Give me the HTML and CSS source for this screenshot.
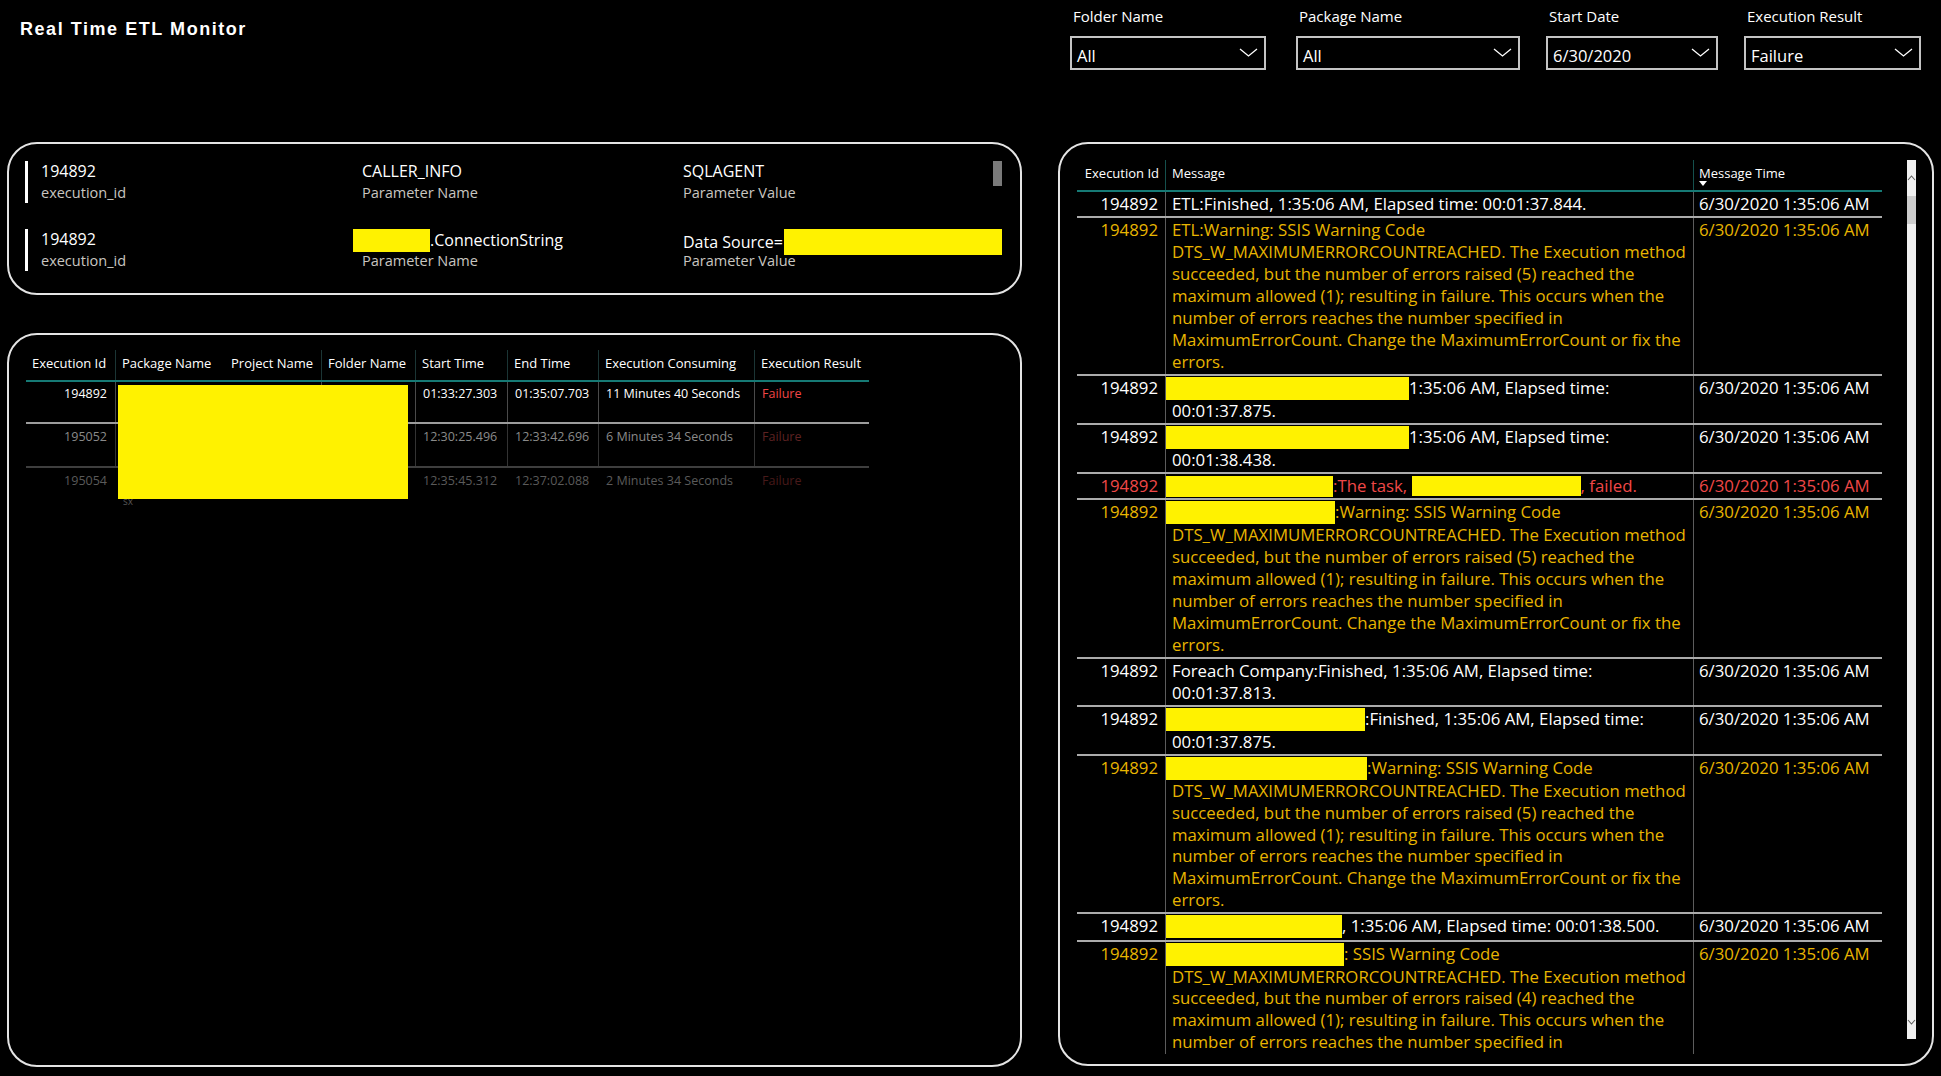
FILE: index.html
```html
<!DOCTYPE html>
<html lang="en">
<head>
<meta charset="utf-8">
<title>Real Time ETL Monitor</title>
<link rel="stylesheet" href="styles.css">
</head>
<body>
<div class="page">
  <header class="topbar">
    <h1 class="title">Real Time ETL Monitor</h1>
    <div class="filters">
      <div class="filter f-folder">
        <div class="flabel">Folder Name</div>
        <div class="select"><span>All</span><svg class="chev" viewBox="0 0 19 9" width="19" height="9"><polyline points="1,1 9.5,8 18,1" fill="none" stroke="#fff" stroke-width="1.3"/></svg></div>
      </div>
      <div class="filter f-package">
        <div class="flabel">Package Name</div>
        <div class="select"><span>All</span><svg class="chev" viewBox="0 0 19 9" width="19" height="9"><polyline points="1,1 9.5,8 18,1" fill="none" stroke="#fff" stroke-width="1.3"/></svg></div>
      </div>
      <div class="filter f-date">
        <div class="flabel">Start Date</div>
        <div class="select"><span>6/30/2020</span><svg class="chev" viewBox="0 0 19 9" width="19" height="9"><polyline points="1,1 9.5,8 18,1" fill="none" stroke="#fff" stroke-width="1.3"/></svg></div>
      </div>
      <div class="filter f-result">
        <div class="flabel">Execution Result</div>
        <div class="select"><span>Failure</span><svg class="chev" viewBox="0 0 19 9" width="19" height="9"><polyline points="1,1 9.5,8 18,1" fill="none" stroke="#fff" stroke-width="1.3"/></svg></div>
      </div>
    </div>
  </header>

  <main class="main">
    <div class="leftcol">
      <section class="panel params">
        <div class="prow">
          <div class="pcell"><div class="pval">194892</div><div class="plab">execution_id</div></div>
          <div class="pcell"><div class="pval">CALLER_INFO</div><div class="plab">Parameter Name</div></div>
          <div class="pcell"><div class="pval">SQLAGENT</div><div class="plab">Parameter Value</div></div>
        </div>
        <div class="prow">
          <div class="pcell"><div class="pval">194892</div><div class="plab">execution_id</div></div>
          <div class="pcell"><div class="pval"><span class="redact r-conn"></span>.ConnectionString</div><div class="plab">Parameter Name</div></div>
          <div class="pcell"><div class="pval">Data Source=<span class="redact r-ds"></span></div><div class="plab">Parameter Value</div></div>
        </div>
        <div class="pscroll"></div>
      </section>

      <section class="panel execs">
        <div class="etable">
          <div class="erow ehead">
            <div class="ec c-id">Execution Id</div>
            <div class="ec c-pkg">Package Name</div>
            <div class="ec c-prj">Project Name</div>
            <div class="ec c-fld">Folder Name</div>
            <div class="ec c-st">Start Time</div>
            <div class="ec c-et">End Time</div>
            <div class="ec c-ec">Execution Consuming</div>
            <div class="ec c-er">Execution Result</div>
          </div>
          <div class="erow ebody r1">
            <div class="ec c-id">194892</div>
            <div class="ec c-pkg"></div>
            <div class="ec c-prj"></div>
            <div class="ec c-fld"></div>
            <div class="ec c-st">01:33:27.303</div>
            <div class="ec c-et">01:35:07.703</div>
            <div class="ec c-ec">11 Minutes 40 Seconds</div>
            <div class="ec c-er fail">Failure</div>
          </div>
          <div class="erow ebody r2">
            <div class="ec c-id">195052</div>
            <div class="ec c-pkg"></div>
            <div class="ec c-prj"></div>
            <div class="ec c-fld"></div>
            <div class="ec c-st">12:30:25.496</div>
            <div class="ec c-et">12:33:42.696</div>
            <div class="ec c-ec">6 Minutes 34 Seconds</div>
            <div class="ec c-er fail">Failure</div>
          </div>
          <div class="erow ebody r3">
            <div class="ec c-id">195054</div>
            <div class="ec c-pkg"><span class="sx">sx</span></div>
            <div class="ec c-prj"></div>
            <div class="ec c-fld"></div>
            <div class="ec c-st">12:35:45.312</div>
            <div class="ec c-et">12:37:02.088</div>
            <div class="ec c-ec">2 Minutes 34 Seconds</div>
            <div class="ec c-er fail">Failure</div>
          </div>
          <div class="redact r-exec"></div>
        </div>
      </section>
    </div>

    <section class="panel messages">
      <div class="mwrap">
        <div class="mrow mhead">
          <div class="mc m-id">Execution Id</div>
          <div class="mc m-msg">Message</div>
          <div class="mc m-time">Message Time<span class="sort"></span></div>
        </div>
        <div class="mrow info">
          <div class="mc m-id">194892</div>
          <div class="mc m-msg">ETL:Finished, 1:35:06 AM, Elapsed time: 00:01:37.844.</div>
          <div class="mc m-time">6/30/2020 1:35:06 AM</div>
        </div>
        <div class="mrow warn">
          <div class="mc m-id">194892</div>
          <div class="mc m-msg">ETL:Warning: SSIS Warning Code<br>DTS_W_MAXIMUMERRORCOUNTREACHED. The Execution method<br>succeeded, but the number of errors raised (5) reached the<br>maximum allowed (1); resulting in failure. This occurs when the<br>number of errors reaches the number specified in<br>MaximumErrorCount. Change the MaximumErrorCount or fix the<br>errors.</div>
          <div class="mc m-time">6/30/2020 1:35:06 AM</div>
        </div>
        <div class="mrow info">
          <div class="mc m-id">194892</div>
          <div class="mc m-msg"><span class="redact mr" style="width:243px"></span>1:35:06 AM, Elapsed time:<br>00:01:37.875.</div>
          <div class="mc m-time">6/30/2020 1:35:06 AM</div>
        </div>
        <div class="mrow info">
          <div class="mc m-id">194892</div>
          <div class="mc m-msg"><span class="redact mr" style="width:243px"></span>1:35:06 AM, Elapsed time:<br>00:01:38.438.</div>
          <div class="mc m-time">6/30/2020 1:35:06 AM</div>
        </div>
        <div class="mrow err">
          <div class="mc m-id">194892</div>
          <div class="mc m-msg"><span class="redact mr" style="width:167px"></span>:The task, <span class="redact mr2" style="width:169px"></span>, failed.</div>
          <div class="mc m-time">6/30/2020 1:35:06 AM</div>
        </div>
        <div class="mrow warn">
          <div class="mc m-id">194892</div>
          <div class="mc m-msg"><span class="redact mr" style="width:169px"></span>:Warning: SSIS Warning Code<br>DTS_W_MAXIMUMERRORCOUNTREACHED. The Execution method<br>succeeded, but the number of errors raised (5) reached the<br>maximum allowed (1); resulting in failure. This occurs when the<br>number of errors reaches the number specified in<br>MaximumErrorCount. Change the MaximumErrorCount or fix the<br>errors.</div>
          <div class="mc m-time">6/30/2020 1:35:06 AM</div>
        </div>
        <div class="mrow info">
          <div class="mc m-id">194892</div>
          <div class="mc m-msg">Foreach Company:Finished, 1:35:06 AM, Elapsed time:<br>00:01:37.813.</div>
          <div class="mc m-time">6/30/2020 1:35:06 AM</div>
        </div>
        <div class="mrow info">
          <div class="mc m-id">194892</div>
          <div class="mc m-msg"><span class="redact mr" style="width:199px"></span>:Finished, 1:35:06 AM, Elapsed time:<br>00:01:37.875.</div>
          <div class="mc m-time">6/30/2020 1:35:06 AM</div>
        </div>
        <div class="mrow warn">
          <div class="mc m-id">194892</div>
          <div class="mc m-msg"><span class="redact mr" style="width:201px"></span>:Warning: SSIS Warning Code<br>DTS_W_MAXIMUMERRORCOUNTREACHED. The Execution method<br>succeeded, but the number of errors raised (5) reached the<br>maximum allowed (1); resulting in failure. This occurs when the<br>number of errors reaches the number specified in<br>MaximumErrorCount. Change the MaximumErrorCount or fix the<br>errors.</div>
          <div class="mc m-time">6/30/2020 1:35:06 AM</div>
        </div>
        <div class="mrow info">
          <div class="mc m-id">194892</div>
          <div class="mc m-msg"><span class="redact mr" style="width:176px"></span>, 1:35:06 AM, Elapsed time: 00:01:38.500.</div>
          <div class="mc m-time">6/30/2020 1:35:06 AM</div>
        </div>
        <div class="mrow warn last">
          <div class="mc m-id">194892</div>
          <div class="mc m-msg"><span class="redact mr" style="width:178px"></span>: SSIS Warning Code<br>DTS_W_MAXIMUMERRORCOUNTREACHED. The Execution method<br>succeeded, but the number of errors raised (4) reached the<br>maximum allowed (1); resulting in failure. This occurs when the<br>number of errors reaches the number specified in</div>
          <div class="mc m-time">6/30/2020 1:35:06 AM</div>
        </div>
      </div>
      <div class="vscroll">
        <svg class="arr" viewBox="0 0 9 6" width="9" height="6"><polyline points="1,5 4.5,1 8,5" fill="none" stroke="#606060" stroke-width="1.1"/></svg>
        <div class="vthumb"></div>
        <div class="vspace"></div>
        <svg class="arr" viewBox="0 0 9 6" width="9" height="6"><polyline points="1,1 4.5,5 8,1" fill="none" stroke="#606060" stroke-width="1.1"/></svg>
      </div>
    </section>
  </main>
</div>
</body>
</html>
```

FILE: styles.css
```css
* { box-sizing: border-box; }
html, body { margin: 0; padding: 0; background: #000; }
body {
  width: 1941px;
  height: 1076px;
  overflow: hidden;
  color: #fff;
  font-family: "Open Sans", "Noto Sans", sans-serif;
}
.page { width: 1941px; height: 1076px; }

/* ---------- top bar ---------- */
.topbar {
  display: flex;
  align-items: flex-start;
  height: 142px;
}
.title {
  margin: 0;
  padding: 18px 0 0 20px;
  font-family: "Liberation Sans", Arial, sans-serif;
  font-weight: 700;
  font-size: 18px;
  line-height: 22px;
  letter-spacing: 1.55px;
  color: #fff;
}
.filters {
  display: flex;
  margin-left: auto;
  padding-right: 20px;
  padding-top: 6px;
}
.filter { display: flex; flex-direction: column; }
.f-folder { width: 196px; }
.f-package { width: 224px; margin-left: 30px; }
.f-date { width: 172px; margin-left: 26px; }
.f-result { width: 177px; margin-left: 26px; }
.flabel {
  font-size: 15px;
  line-height: 20px;
  padding-left: 3px;
  color: #fff;
  margin-bottom: 10px;
  white-space: nowrap;
}
.select {
  height: 34px;
  border: 2px solid #c4c4c4;
  display: flex;
  align-items: center;
  justify-content: space-between;
  padding: 4px 6px 0 5px;
  font-size: 16.5px;
  color: #fff;
}
.chev { display: block; margin-top: -5px; }

/* ---------- main grid ---------- */
.main {
  display: grid;
  grid-template-columns: 1015px 876px;
  column-gap: 36px;
  padding-left: 7px;
}
.leftcol { display: flex; flex-direction: column; gap: 38px; }
.panel {
  position: relative;
  border: 2px solid #e4e4e4;
  border-radius: 30px;
  background: #000;
}

/* ---------- parameters card ---------- */
.params {
  height: 153px;
  padding: 17px 0 0 16px;
  display: flex;
  flex-direction: column;
  gap: 26px;
}
.prow {
  display: grid;
  grid-template-columns: 321px 321px 320px;
  border-left: 3px solid #fff;
  padding-left: 13px;
  height: 42px;
}
.pval { font-size: 16px; line-height: 21px; height: 21px; color: #fff; white-space: nowrap; }
.plab { font-size: 14.5px; line-height: 21px; color: #c9c6c0; white-space: nowrap; }
.redact { background: #fff200; display: inline-block; }
.r-conn { width: 77px; height: 23px; margin-left: -9px; vertical-align: -6px; }
.r-ds { width: 218px; height: 26px; vertical-align: -7px; margin-left: 1px; }
.pscroll {
  position: absolute;
  right: 18px;
  top: 17px;
  width: 9px;
  height: 25px;
  background: #7a7a7a;
}

/* ---------- executions table ---------- */
.execs {
  height: 734px;
  padding: 15px 0 0 17px;
}
.etable { position: relative; width: 843px; }
.erow {
  display: grid;
  grid-template-columns: 89px 110px 96px 94px 92px 91px 156px 115px;
}
.ehead {
  height: 32px;
  border-bottom: 2px solid #167a75;
  font-size: 13px;
}
.ehead .ec {
  line-height: 26px;
  border-left: 1px solid #1b3535;
  padding-left: 6px;
  white-space: nowrap;
  color: #fff;
}
.ehead .c-id { border-left: none; padding-left: 6px; }
.ehead .c-prj { border-left: none; padding-left: 6px; }
.ebody {
  height: 42px;
  font-size: 12.5px;
}
.ebody .ec {
  padding: 4px 0 0 7px;
  line-height: 16px;
  white-space: nowrap;
  border-left: 1px solid #4a4a4a;
}
.ebody .c-id { border-left: none; text-align: right; padding: 4px 8px 0 0; }
.ebody .c-prj { border-left: none; }
.r1 { border-bottom: 2px solid #9c9c9c; color: #fff; }
.r1 .fail { color: #f04646; }
.r2 { height: 44px; border-bottom: 2px solid #3e3e3e; color: #8a8a8a; }
.r2 .ec { border-left-color: #333; padding-top: 5px; }
.r2 .fail { color: #5e2222; }
.r3 { color: #5a5a5a; }
.r3 .ec { border-left-color: transparent; padding-top: 5px; }
.r3 .fail { color: #481a1a; }
.r2 .c-id, .r3 .c-id, .r1 .c-id { border-left: none; }
.sx { display: block; padding-top: 22px; font-size: 10px; line-height: 12px; color: #555; }
.r-exec {
  position: absolute;
  left: 92px;
  top: 35px;
  width: 290px;
  height: 114px;
}

/* ---------- messages table ---------- */
.messages {
  height: 924px;
  padding: 16px 0 0 17px;
  display: flex;
  align-items: flex-start;
}
.mwrap {
  width: 805px;
  height: 895px;
  overflow: hidden;
  flex: none;
}
.mrow {
  display: grid;
  grid-template-columns: 88px 528px 189px;
  border-bottom: 2px solid #ababab;
}
.mrow.last { border-bottom: none; }
.mc {
  font-size: 16.8px;
  line-height: 21.9px;
  padding-top: 1px;
  padding-bottom: 1.2px;
  white-space: nowrap;
}
.m-id { text-align: right; padding-right: 7px; }
.m-msg { border-left: 1px solid #5c5c5c; padding-left: 6px; }
.m-time { border-left: 1px solid #5c5c5c; padding-left: 5px; }
.mhead { border-bottom: 2px solid #167a75; height: 32px; }
.mhead .mc {
  font-size: 13px;
  line-height: 20px;
  padding-top: 3px;
  border-left-color: #15504d;
  position: relative;
}
.mhead .m-id { padding-right: 6px; }
.sort {
  position: absolute;
  left: 5px;
  top: 21px;
  width: 0;
  height: 0;
  border-left: 4px solid transparent;
  border-right: 4px solid transparent;
  border-top: 5px solid #fff;
}
.info .mc { color: #fff; }
.warn .mc { color: #e8b500; }
.err .mc { color: #f04848; }
.mr { height: 23px; margin-left: -6px; vertical-align: -6px; }
.mr2 { height: 20px; vertical-align: -4px; }
.err .mr { height: 21px; vertical-align: -5px; }

.vscroll {
  margin-left: 25px;
  width: 9px;
  height: 879px;
  background: #f0f0f0;
  display: flex;
  flex-direction: column;
  align-items: center;
  flex: none;
}
.vscroll .arr { margin-top: 15px; display: block; }
.vthumb { width: 9px; height: 28px; background: #cdcdcd; margin-top: 15px; }
.vspace { flex: 1; }
.vscroll .arr:last-child { margin-top: 0; margin-bottom: 14px; }
```
